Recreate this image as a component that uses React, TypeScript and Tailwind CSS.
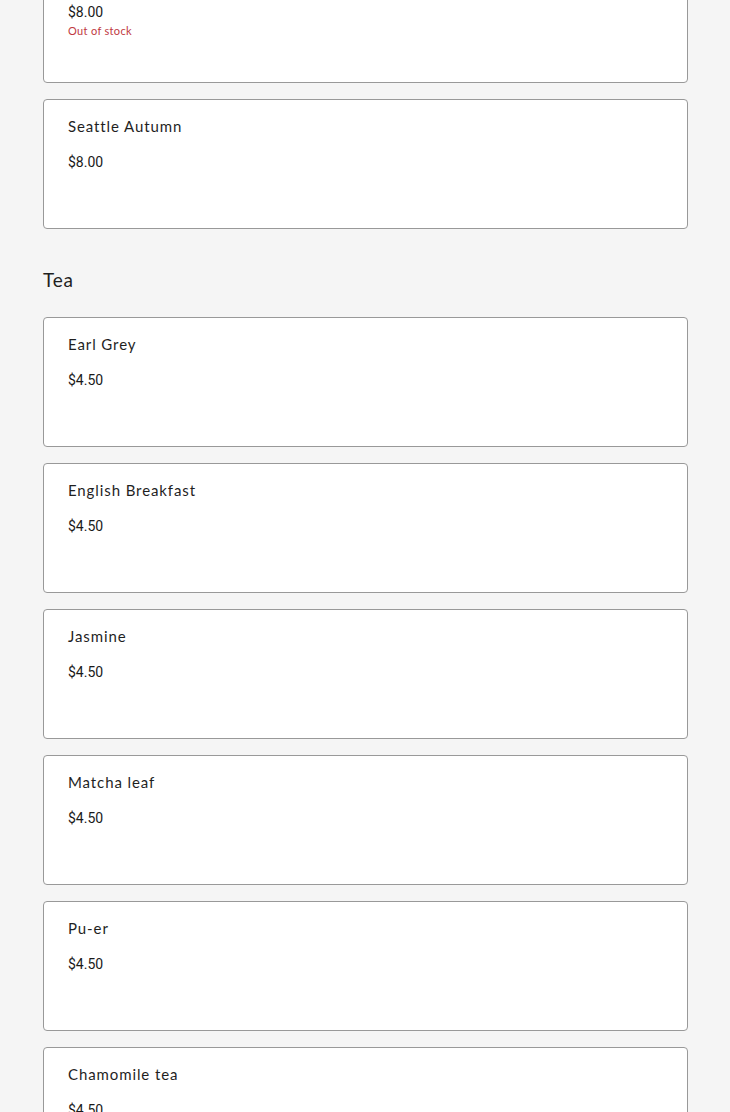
import React from 'react';

type Item = { name: string; price: string; outOfStock?: boolean };

const coffeeTail: Item[] = [
  { name: 'Harvest Blend', price: '$8.00', outOfStock: true },
  { name: 'Seattle Autumn', price: '$8.00' },
];

const tea: Item[] = [
  { name: 'Earl Grey', price: '$4.50' },
  { name: 'English Breakfast', price: '$4.50' },
  { name: 'Jasmine', price: '$4.50' },
  { name: 'Matcha leaf', price: '$4.50' },
  { name: 'Pu-er', price: '$4.50' },
  { name: 'Chamomile tea', price: '$4.50' },
];

const roundFont = "font-['Lato','Open_Sans',sans-serif]";

function ItemCard({ item }: { item: Item }) {
  return (
    <div className="bg-white border border-[#999999] rounded-[4px] min-h-[130px] px-6 pt-4 pb-[43px] flex flex-col">
      <div className={`${roundFont} text-[15px] leading-5 h-5 tracking-[0.06em] text-[#1f1f1f]`}>{item.name}</div>
      <div className="mt-[15px] h-5 leading-[22px] text-[14px] text-[#1a1a1a] font-['Roboto',sans-serif]">{item.price}</div>
      {item.outOfStock && (
        <div className={`${roundFont} mt-[2px] h-4 leading-4 text-[11px] tracking-[0.03em] text-[#c0393f]`}>Out of stock</div>
      )}
    </div>
  );
}

export default function App() {
  return (
    <div className="min-h-screen bg-[#f5f5f5] overflow-hidden">
      <div className="pl-[43px] pr-[42px] -mt-[51px] flex flex-col">
        {/* tail of the coffee section */}
        <div className="flex flex-col gap-4">
          {coffeeTail.map(item => (
            <ItemCard key={item.name} item={item} />
          ))}
        </div>

        {/* Tea section */}
        <h2 className={`${roundFont} mt-[39px] mb-[25px] h-6 leading-6 text-[19px] tracking-[0.04em] text-[#1f1f1f]`}>Tea</h2>
        <div className="flex flex-col gap-4">
          {tea.map(item => (
            <ItemCard key={item.name} item={item} />
          ))}
        </div>
      </div>
    </div>
  );
}
